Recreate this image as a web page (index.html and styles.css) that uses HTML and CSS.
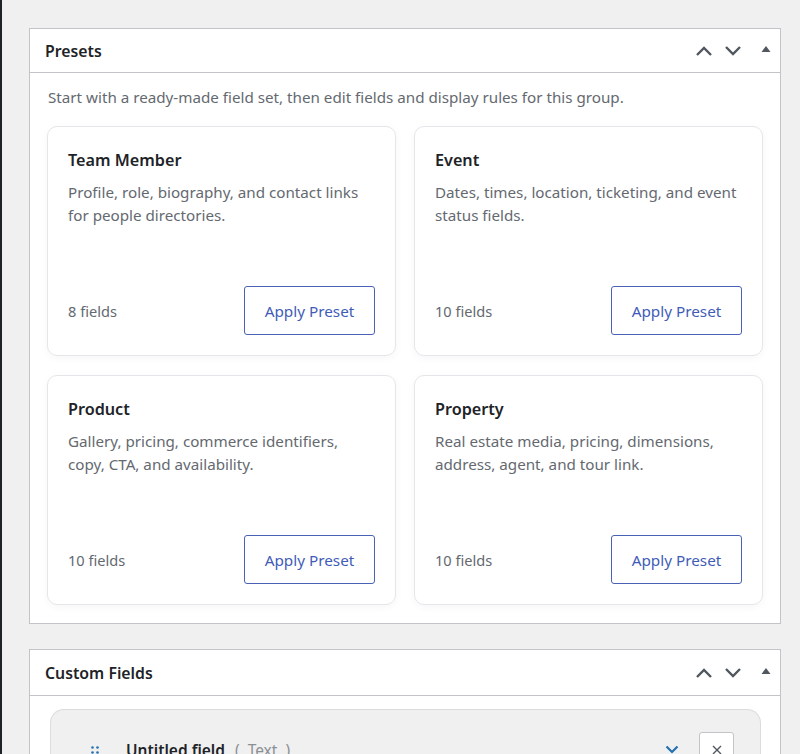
FILE: index.html
```html
<!DOCTYPE html>
<html>
<head>
    <title>Presets</title>
    <meta charset="utf-8">
    <link rel="stylesheet" href="styles.css">
</head>
<body>
    <div class="wrap">
        <!-- Painel de presets -->
        <div class="postbox">
            <div class="postbox-header">
                <h2>Presets</h2>
                <div class="handle-actions">
                    <button class="handle-btn" aria-label="Move up">
                        <svg width="18" height="12" viewBox="0 0 18 12"><polyline points="2,10 9,3 16,10" fill="none" stroke="#50575e" stroke-width="2.4"/></svg>
                    </button>
                    <button class="handle-btn" aria-label="Move down">
                        <svg width="18" height="12" viewBox="0 0 18 12"><polyline points="2,2 9,9 16,2" fill="none" stroke="#50575e" stroke-width="2.4"/></svg>
                    </button>
                    <button class="handle-btn toggle" aria-label="Toggle panel">
                        <svg width="10" height="8" viewBox="0 0 10 8"><polygon points="5,1 9.5,7 0.5,7" fill="#50575e"/></svg>
                    </button>
                </div>
            </div>
            <div class="inside">
                <p class="intro">Start with a ready-made field set, then edit fields and display rules for this group.</p>
                <div class="preset-grid">
                    <div class="preset-card">
                        <h3>Team Member</h3>
                        <p>Profile, role, biography, and contact links for people directories.</p>
                        <div class="preset-footer">
                            <span class="count">8 fields</span>
                            <button class="apply-btn">Apply Preset</button>
                        </div>
                    </div>
                    <div class="preset-card">
                        <h3>Event</h3>
                        <p>Dates, times, location, ticketing, and event status fields.</p>
                        <div class="preset-footer">
                            <span class="count">10 fields</span>
                            <button class="apply-btn">Apply Preset</button>
                        </div>
                    </div>
                    <div class="preset-card">
                        <h3>Product</h3>
                        <p>Gallery, pricing, commerce identifiers, copy, CTA, and availability.</p>
                        <div class="preset-footer">
                            <span class="count">10 fields</span>
                            <button class="apply-btn">Apply Preset</button>
                        </div>
                    </div>
                    <div class="preset-card">
                        <h3>Property</h3>
                        <p>Real estate media, pricing, dimensions, address, agent, and tour link.</p>
                        <div class="preset-footer">
                            <span class="count">10 fields</span>
                            <button class="apply-btn">Apply Preset</button>
                        </div>
                    </div>
                </div>
            </div>
        </div>

        <!-- Painel de campos -->
        <div class="postbox">
            <div class="postbox-header tall">
                <h2>Custom Fields</h2>
                <div class="handle-actions">
                    <button class="handle-btn" aria-label="Move up">
                        <svg width="18" height="12" viewBox="0 0 18 12"><polyline points="2,10 9,3 16,10" fill="none" stroke="#50575e" stroke-width="2.4"/></svg>
                    </button>
                    <button class="handle-btn" aria-label="Move down">
                        <svg width="18" height="12" viewBox="0 0 18 12"><polyline points="2,2 9,9 16,2" fill="none" stroke="#50575e" stroke-width="2.4"/></svg>
                    </button>
                    <button class="handle-btn toggle" aria-label="Toggle panel">
                        <svg width="10" height="8" viewBox="0 0 10 8"><polygon points="5,1 9.5,7 0.5,7" fill="#50575e"/></svg>
                    </button>
                </div>
            </div>
            <div class="inside fields">
                <div class="field-item">
                    <div class="field-row">
                        <span class="drag">
                            <svg width="8" height="8" viewBox="0 0 8 8"><circle cx="1.5" cy="1.5" r="1.3" fill="#2271b1"/><circle cx="6.5" cy="1.5" r="1.3" fill="#2271b1"/><circle cx="1.5" cy="6.5" r="1.3" fill="#2271b1"/><circle cx="6.5" cy="6.5" r="1.3" fill="#2271b1"/></svg>
                        </span>
                        <span class="field-name">Untitled field</span>
                        <span class="field-type">( &nbsp;Text&nbsp; )</span>
                        <span class="field-toggle">
                            <svg width="14" height="9" viewBox="0 0 14 9"><polyline points="1.5,1.5 7,7 12.5,1.5" fill="none" stroke="#2271b1" stroke-width="2.2"/></svg>
                        </span>
                        <button class="remove-btn" aria-label="Remove">
                            <svg width="10" height="10" viewBox="0 0 10 10"><path d="M1 1 L9 9 M9 1 L1 9" stroke="#50575e" stroke-width="1.4"/></svg>
                        </button>
                    </div>
                </div>
            </div>
        </div>
    </div>
</body>
</html>
```

FILE: styles.css
```css
body {
    margin: 0;
    background-color: #f0f0f1;
    border-left: 2px solid #1d2327;
    font-family: "Noto Sans", "Open Sans", sans-serif;
    color: #1d2327;
    height: 754px;
    overflow: hidden;
    box-sizing: border-box;
}

.wrap {
    padding: 28px 19px 0 27px;
}

.postbox {
    background-color: #ffffff;
    border: 1px solid #c3c4c7;
    margin-bottom: 25px;
}

.postbox-header {
    display: flex;
    align-items: center;
    justify-content: space-between;
    height: 43px;
    border-bottom: 1px solid #c3c4c7;
    padding: 0 0 0 15px;
}

.postbox-header.tall {
    height: 45px;
}

.postbox-header h2 {
    margin: 0;
    font-size: 15.8px;
    font-weight: 600;
    color: #1d2327;
}

.handle-actions {
    display: flex;
    align-items: center;
}

.handle-btn {
    background: none;
    border: none;
    padding: 0;
    width: 29px;
    height: 30px;
    display: flex;
    align-items: center;
    justify-content: center;
}

.handle-btn.toggle {
    margin-left: 4px;
    margin-top: -3px;
}

.inside {
    padding: 14px 17px 18px 17px;
}

.intro {
    margin: 0 0 18px 1px;
    font-size: 15.2px;
    line-height: 21px;
    color: #646970;
}

.preset-grid {
    display: grid;
    grid-template-columns: 1fr 1fr;
    gap: 19px 18px;
}

.preset-card {
    display: flex;
    flex-direction: column;
    min-height: 230px;
    box-sizing: border-box;
    padding: 21px 20px 20px 20px;
    border: 1px solid #e4e6ea;
    border-radius: 10px;
    box-shadow: 0 2px 8px rgba(0, 0, 0, 0.04);
}

.preset-card h3 {
    margin: 0 0 9px 0;
    font-size: 16.2px;
    line-height: 24px;
    font-weight: 600;
    color: #1d2327;
}

.preset-card p {
    margin: 0;
    font-size: 15.2px;
    line-height: 23px;
    color: #646970;
}

.preset-footer {
    margin-top: auto;
    display: flex;
    align-items: center;
    justify-content: space-between;
}

.count {
    font-size: 14.6px;
    color: #646970;
}

.apply-btn {
    width: 131px;
    height: 49px;
    background-color: #ffffff;
    border: 1px solid #4a62b5;
    border-radius: 3px;
    color: #3f5cb8;
    font-family: "Noto Sans", "Open Sans", sans-serif;
    font-size: 15.3px;
}

.inside.fields {
    padding: 13px 19px 0 20px;
}

.field-item {
    background-color: #f0f0f1;
    border: 1px solid #dcdcde;
    border-bottom: none;
    border-radius: 14px 14px 0 0;
    height: 60px;
}

.field-row {
    display: flex;
    align-items: center;
    padding: 22px 26px 0 40px;
}

.drag {
    display: flex;
    width: 35px;
}

.field-name {
    font-size: 15.5px;
    font-weight: 600;
    color: #1d2327;
}

.field-type {
    margin-left: 10px;
    font-size: 15.5px;
    color: #8c8f94;
}

.field-toggle {
    margin-left: auto;
    margin-right: 20px;
    display: flex;
}

.remove-btn {
    width: 35px;
    height: 35px;
    background-color: #ffffff;
    border: 1px solid #c3c4c7;
    border-radius: 3px;
    display: flex;
    align-items: center;
    justify-content: center;
    padding: 0;
}
```
